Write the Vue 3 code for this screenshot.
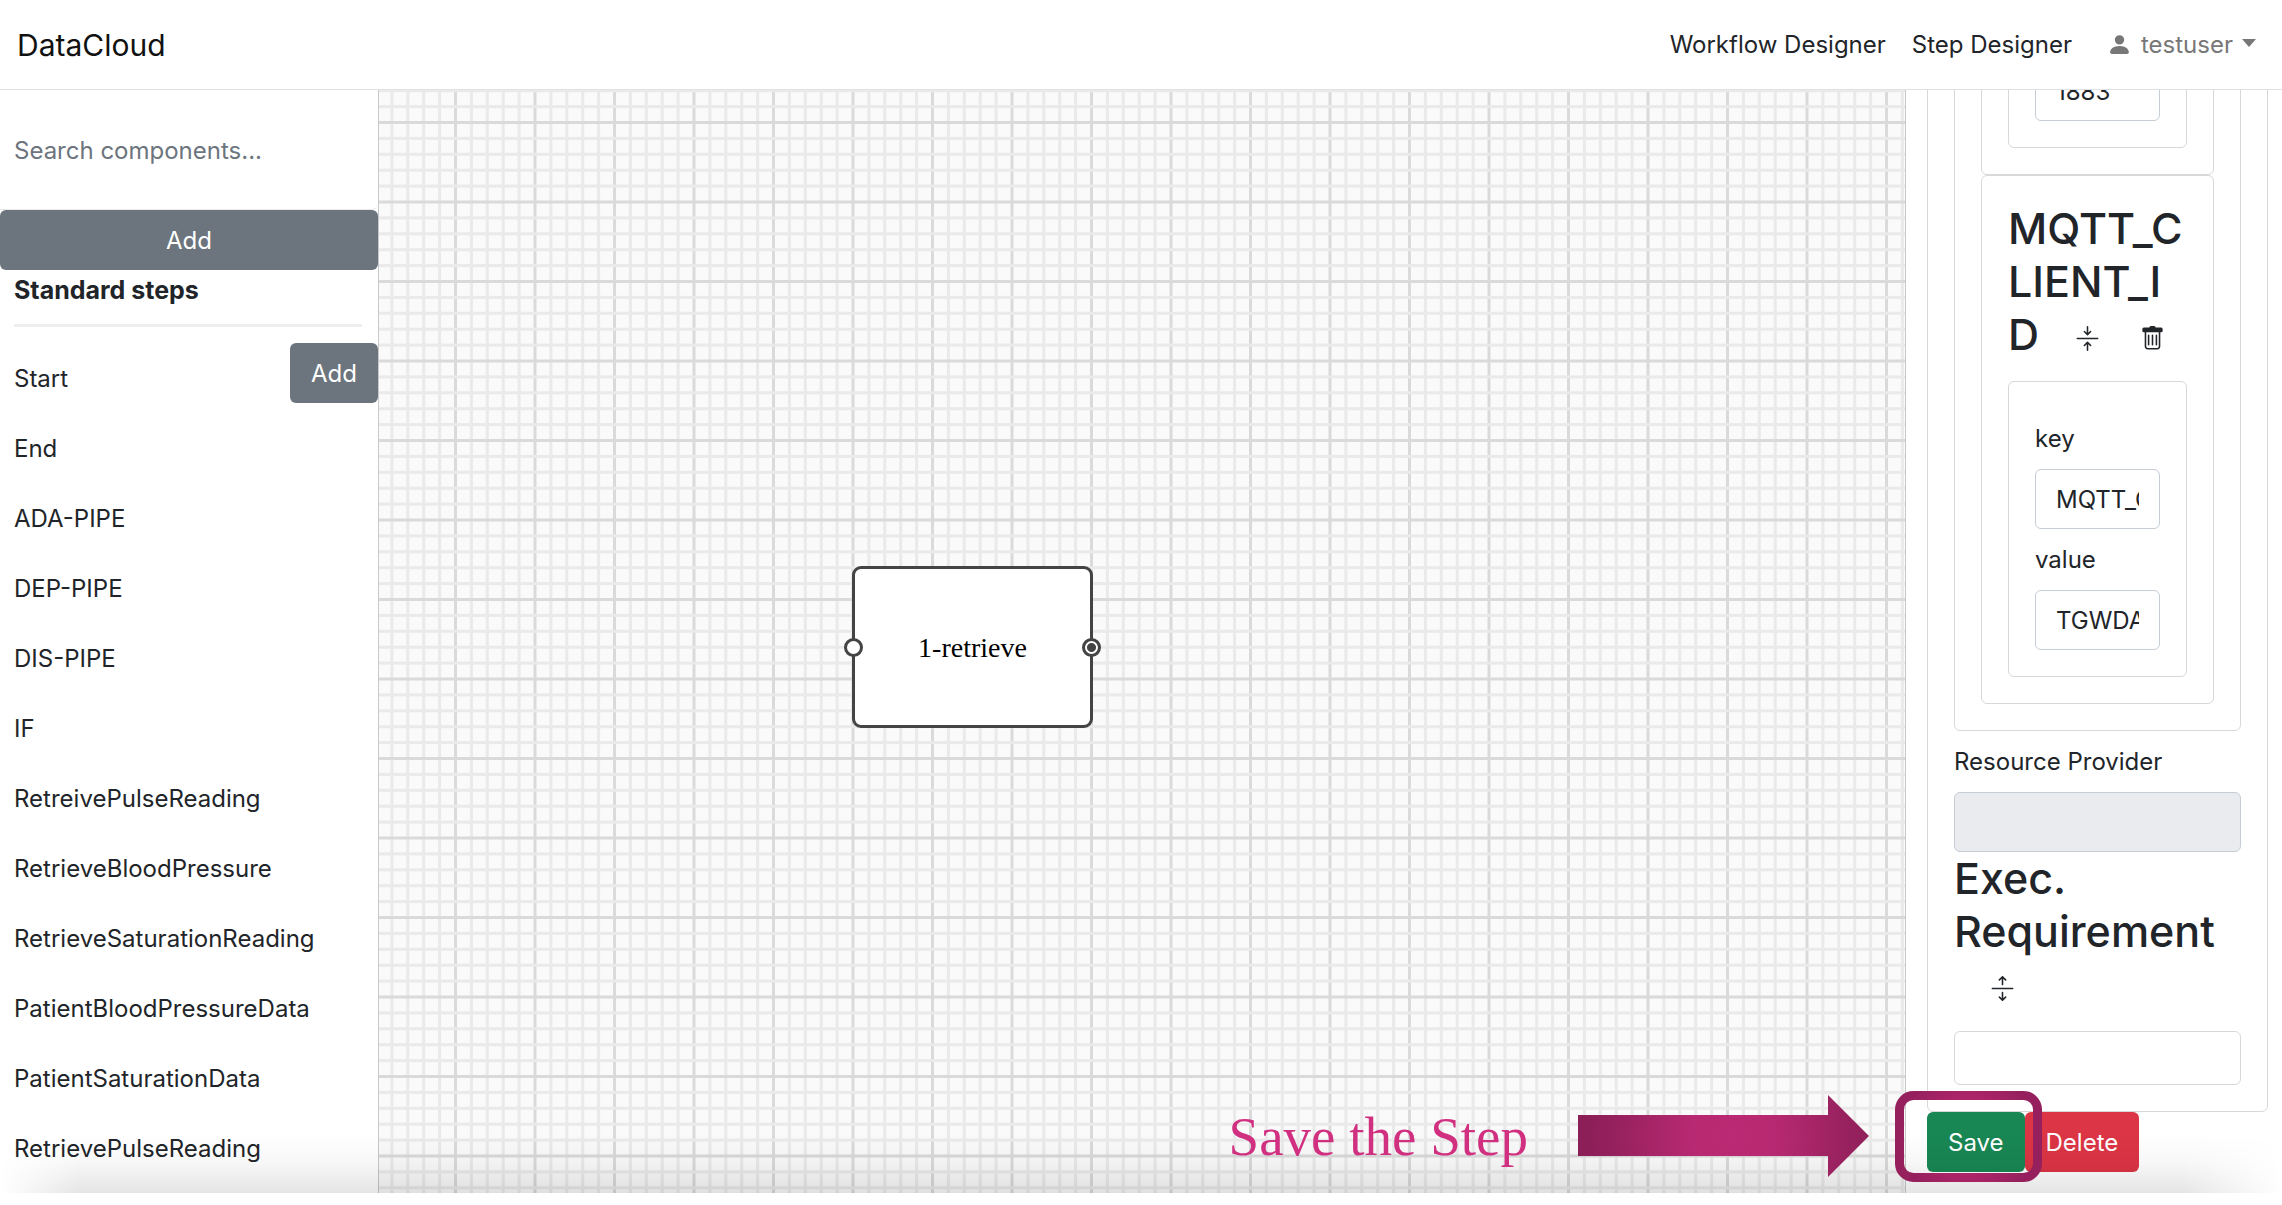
<script setup>
import { ref } from 'vue'

const search = ref('')
const steps = [
  'Start', 'End', 'ADA-PIPE', 'DEP-PIPE', 'DIS-PIPE', 'IF',
  'RetreivePulseReading', 'RetrieveBloodPressure', 'RetrieveSaturationReading',
  'PatientBloodPressureData', 'PatientSaturationData', 'RetrievePulseReading',
]
const port = ref('1883')
const envKey = ref('MQTT_CLIENT_ID')
const envValue = ref('TGWDATA')
</script>

<template>
  <div class="app">
    <header class="navbar">
      <a class="brand" href="#">DataCloud</a>
      <nav class="links">
        <a href="#">Workflow Designer</a>
        <a href="#">Step Designer</a>
        <button class="user" type="button">
          <svg class="icon" viewBox="0 0 16 16"><path d="M3 14s-1 0-1-1 1-4 6-4 6 3 6 4-1 1-1 1H3zm5-6a3 3 0 1 0 0-6 3 3 0 0 0 0 6z" /></svg>
          <span>testuser</span>
          <i class="caret"></i>
        </button>
      </nav>
    </header>

    <main class="workspace">
      <aside class="sidebar">
        <div class="search">
          <input v-model="search" type="text" placeholder="Search components..." aria-label="Search components" />
        </div>
        <button class="btn wide" type="button">Add</button>
        <h2 class="group">Standard steps</h2>
        <ul class="steps">
          <li v-for="(step, i) in steps" :key="i">
            <span>{{ step }}</span>
            <button v-if="i === 0" class="btn" type="button">Add</button>
          </li>
        </ul>
      </aside>

      <section class="canvas">
        <svg class="grid" aria-hidden="true">
          <defs>
            <pattern id="grid" x="75" y="31" width="159" height="159" patternUnits="userSpaceOnUse">
              <rect width="159" height="159" fill="#fafafa" />
              <rect v-for="n in 10" :key="'v' + n" :x="(n - 1) * 15.9" y="0" width="3" height="159" :fill="n % 5 === 1 ? '#dadada' : '#eaeaea'" />
              <rect v-for="n in 10" :key="'h' + n" x="0" :y="(n - 1) * 15.9" width="159" height="3" :fill="n % 5 === 1 ? '#dadada' : '#eaeaea'" />
            </pattern>
          </defs>
          <rect width="100%" height="100%" fill="url(#grid)" />
        </svg>
        <div class="node">
          <i class="port in"></i>
          <span>1-retrieve</span>
          <i class="port out"></i>
        </div>
      </section>

      <aside class="panel">
        <div class="box">
          <div class="box">
            <div class="box">
              <div class="box">
                <input v-model="port" class="field" type="text" aria-label="value" />
              </div>
            </div>
            <div class="box">
              <h3>MQTT_CLIENT_ID<button class="tool" type="button" aria-label="Collapse"><svg class="icon" viewBox="0 0 16 16"><path d="M1 8a.5.5 0 0 1 .5-.5h13a.5.5 0 0 1 0 1h-13A.5.5 0 0 1 1 8zm7-8a.5.5 0 0 1 .5.5v3.793l1.146-1.147a.5.5 0 0 1 .708.708l-2 2a.5.5 0 0 1-.708 0l-2-2a.5.5 0 1 1 .708-.708L7.5 4.293V.5A.5.5 0 0 1 8 0zm-.5 11.707-1.146 1.147a.5.5 0 0 1-.708-.708l2-2a.5.5 0 0 1 .708 0l2 2a.5.5 0 0 1-.708.708L8.5 11.707V15.5a.5.5 0 0 1-1 0v-3.793z" /></svg></button><button class="tool" type="button" aria-label="Remove"><svg class="icon" viewBox="0 0 16 16"><path d="M5.5 5.5A.5.5 0 0 1 6 6v6a.5.5 0 0 1-1 0V6a.5.5 0 0 1 .5-.5zm2.5 0a.5.5 0 0 1 .5.5v6a.5.5 0 0 1-1 0V6a.5.5 0 0 1 .5-.5zm3 .5a.5.5 0 0 0-1 0v6a.5.5 0 0 0 1 0V6z" /><path d="M14.5 3a1 1 0 0 1-1 1H13v9a2 2 0 0 1-2 2H5a2 2 0 0 1-2-2V4h-.5a1 1 0 0 1-1-1V2a1 1 0 0 1 1-1H6a1 1 0 0 1 1-1h2a1 1 0 0 1 1 1h3.5a1 1 0 0 1 1 1v1zM4.118 4 4 4.059V13a1 1 0 0 0 1 1h6a1 1 0 0 0 1-1V4.059L11.882 4H4.118z" /></svg></button></h3>
              <div class="box">
                <label for="env-key">key</label>
                <input id="env-key" v-model="envKey" class="field" type="text" />
                <label for="env-value">value</label>
                <input id="env-value" v-model="envValue" class="field" type="text" />
              </div>
            </div>
          </div>
          <label for="provider">Resource Provider</label>
          <input id="provider" class="field" type="text" disabled />
          <h3>Exec. Requirement <button class="tool" type="button" aria-label="Expand"><svg class="icon" viewBox="0 0 16 16"><path d="M1 8a.5.5 0 0 1 .5-.5h13a.5.5 0 0 1 0 1h-13A.5.5 0 0 1 1 8zM7.646.146a.5.5 0 0 1 .708 0l2 2a.5.5 0 0 1-.708.708L8.5 1.707V5.5a.5.5 0 0 1-1 0V1.707L6.354 2.854a.5.5 0 1 1-.708-.708l2-2zM8 10a.5.5 0 0 1 .5.5v3.793l1.146-1.147a.5.5 0 0 1 .708.708l-2 2a.5.5 0 0 1-.708 0l-2-2a.5.5 0 0 1 .708-.708L7.5 14.293V10.5A.5.5 0 0 1 8 10z" /></svg></button></h3>
          <div class="box"></div>
        </div>
        <div class="actions">
          <button class="btn save" type="button">Save</button>
          <button class="btn delete" type="button">Delete</button>
        </div>
      </aside>

      <div class="shade"></div>
      <div class="callout">
        <span>Save the Step</span>
        <svg width="291" height="82" viewBox="0 0 291 82">
          <defs>
            <radialGradient id="arrow" gradientUnits="userSpaceOnUse" cx="155" cy="41" r="145">
              <stop offset="0" stop-color="#bb2a74" />
              <stop offset="0.3" stop-color="#b72972" />
              <stop offset="0.8" stop-color="#97215e" />
              <stop offset="1" stop-color="#8c1f58" />
            </radialGradient>
          </defs>
          <path d="M0 20H250V0L291 41L250 82V61H0z" fill="url(#arrow)" />
        </svg>
      </div>
      <svg class="frame" width="147" height="91" viewBox="0 0 147 91">
        <defs>
          <radialGradient id="frame" gradientUnits="userSpaceOnUse" cx="73" cy="45" r="75">
            <stop offset="0.5" stop-color="#ad2569" />
            <stop offset="0.9" stop-color="#95205d" />
          </radialGradient>
        </defs>
        <rect x="4.5" y="4.5" width="138" height="82" rx="14" fill="none" stroke="url(#frame)" stroke-width="9" />
      </svg>
    </main>
  </div>
</template>

<style>
body {
  margin: 0;
  background: #fff;
}
</style>

<style scoped>
* {
  box-sizing: border-box;
}

.app {
  display: flex;
  flex-direction: column;
  height: 100vh;
  padding-bottom: 12px;
  overflow: hidden;
  color: #212529;
  font-family: Inter, "Liberation Sans", sans-serif;
  font-size: 24px;
  line-height: 38px;
}

button,
input {
  font: inherit;
  color: inherit;
}

.icon {
  display: block;
  width: 25px;
  height: 25px;
  fill: currentColor;
}

.navbar {
  display: flex;
  flex: none;
  align-items: center;
  justify-content: space-between;
  height: 90px;
  padding: 0 26px 0 17px;
  border-bottom: 1px solid #dee2e6;
}

.navbar a {
  color: inherit;
  text-decoration: none;
}

.navbar .brand {
  color: #111;
  font-size: 30px;
}

.links {
  display: flex;
  align-items: center;
  gap: 26px;
}

.user {
  display: flex;
  align-items: center;
  gap: 9px;
  margin-left: 9px;
  padding: 0;
  border: 0;
  background: none;
  color: #777;
}

.caret {
  margin-bottom: 4px;
  border: 7px solid transparent;
  border-top: 8px solid #777;
  border-bottom: 0;
}

.workspace {
  position: relative;
  display: flex;
  flex: 1;
  min-height: 0;
}

.sidebar {
  flex: none;
  width: 379px;
  overflow: hidden;
  border-right: 1px solid #c8c8c8;
}

.search {
  height: 120px;
  padding: 31px 14px;
  border-bottom: 1px solid #e9e9e9;
  border-radius: 0 0 6px 0;
}

.search input {
  width: 100%;
  height: 58px;
  padding: 0;
  border: 0;
  background: none;
}

.search input::placeholder {
  color: #6c757d;
  opacity: 1;
}

.btn {
  height: 60px;
  padding: 2px 21px 0;
  border: 0;
  border-radius: 6px;
  background: #6c757d;
  color: #fff;
}

.wide {
  display: block;
  width: 100%;
}

.group {
  margin: 0 16px 0 14px;
  padding-bottom: 14px;
  border-bottom: 3px solid #eee;
  font-size: 25px;
  line-height: 40px;
  font-weight: 700;
}

.steps {
  margin: 0;
  padding: 16px 0 0;
  list-style: none;
}

.steps li {
  display: flex;
  align-items: flex-start;
  justify-content: space-between;
  height: 70px;
  padding-left: 14px;
}

.steps span {
  line-height: 72px;
}

.canvas {
  position: relative;
  flex: 1;
  min-width: 0;
  overflow: hidden;
  border-right: 1px solid #c8c8c8;
}

.grid {
  display: block;
  width: 100%;
  height: 100%;
}

.node {
  position: absolute;
  left: 473px;
  top: 476px;
  display: flex;
  align-items: center;
  justify-content: center;
  width: 241px;
  height: 162px;
  padding-top: 2px;
  border: 3px solid #444;
  border-radius: 9px;
  background: #fff;
  color: #000;
  font: 28px "Liberation Serif", serif;
}

.port {
  position: absolute;
  top: 69px;
  width: 19px;
  height: 19px;
  border: 3px solid #444;
  border-radius: 50%;
  background: #fff;
}

.in {
  left: -11px;
}

.out {
  right: -11px;
  background: radial-gradient(circle, #444 4px, #fff 5px);
}

.panel {
  display: flex;
  flex: none;
  flex-direction: column;
  justify-content: flex-end;
  width: 376px;
  padding: 0 14px 21px 21px;
  overflow: hidden;
}

.box {
  padding: 26px;
  border: 1px solid #d8d8d8;
  border-radius: 6px;
}

label {
  display: block;
  line-height: 61px;
}

.field {
  display: block;
  width: 100%;
  height: 60px;
  padding: 0 20px;
  border: 1px solid #c6cdd4;
  border-radius: 6px;
  background: #fff;
}

.field:disabled {
  background: #e9ebef;
}

h3 {
  margin: 0 0 20px;
  font-size: 43px;
  line-height: 53px;
  font-weight: 500;
  overflow-wrap: anywhere;
}

.tool {
  margin: 0 0 0 36px;
  padding: 0;
  border: 0;
  background: none;
  line-height: 24px;
  vertical-align: -1px;
}

.tool + .tool {
  margin-left: 40px;
}

.actions {
  display: flex;
}

.save {
  background: #198754;
}

.delete {
  background: #dc3545;
}

.shade {
  position: absolute;
  right: 0;
  bottom: 0;
  left: 0;
  height: 60px;
  background: linear-gradient(to bottom, transparent, rgba(0, 0, 0, 0.03) 50%, rgba(0, 0, 0, 0.1));
  mask-image: linear-gradient(to right, transparent, #000 80px, #000 calc(100% - 100px), transparent);
  pointer-events: none;
}

.callout {
  position: absolute;
  right: 413px;
  bottom: 16px;
  display: flex;
  align-items: center;
  gap: 50px;
  color: #d12f80;
  font: 55px "Liberation Serif", serif;
}

.frame {
  position: absolute;
  right: 240px;
  bottom: 11px;
  pointer-events: none;
}
</style>
